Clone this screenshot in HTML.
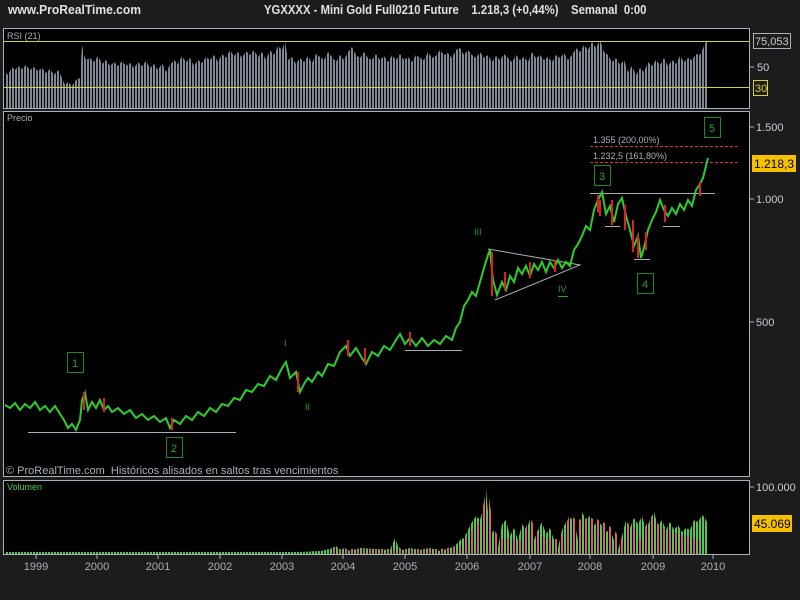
<!DOCTYPE html>
<html><head><meta charset="utf-8"><style>
body{margin:0;background:#1c1c1c;width:800px;height:600px;overflow:hidden;font-family:"Liberation Sans",sans-serif;}
.t{position:absolute;color:#c8cdd2;font-size:11px;white-space:nowrap}
</style></head><body>
<div class="t" style="left:8px;top:2px;font-size:13px;font-weight:bold;color:#e0e0e0;transform:scaleX(.93);transform-origin:left">www.ProRealTime.com</div>
<div class="t" style="left:264px;top:2px;font-size:13px;font-weight:bold;color:#e0e0e0;transform:scaleX(.87);transform-origin:left">YGXXXX - Mini Gold Full0210 Future &nbsp;&nbsp; 1.218,3 (+0,44%) &nbsp;&nbsp; Semanal &nbsp;0:00</div>
<svg width="800" height="600" style="position:absolute;left:0;top:0">
<defs>
<pattern id="st" width="3" height="10" patternUnits="userSpaceOnUse"><rect width="2" height="10" fill="#7d8894"/></pattern>
<pattern id="vg" width="3" height="10" patternUnits="userSpaceOnUse"><rect width="2" height="10" fill="#4fc94f"/></pattern>
<pattern id="vr" width="6" height="10" patternUnits="userSpaceOnUse"><rect x="3" width="2" height="10" fill="#e06060"/></pattern>
</defs>
<rect x="3.5" y="28.5" width="746" height="80" fill="#000" stroke="#a8b0b8"/>
<rect x="3.5" y="111.5" width="746" height="365" fill="#000" stroke="#a8b0b8"/>
<rect x="3.5" y="480.5" width="746" height="74" fill="#000" stroke="#a8b0b8"/>
<polygon fill="url(#st)" points="5,108 5,72 8,75 12,67 15,70 18,66 22,69 26,65 30,70 34,67 38,71 42,68 46,73 50,69 54,75 58,70 62,78 65,85 68,82 72,86 76,80 80,78 82,45 84,55 86,60 90,58 94,62 98,56 102,64 106,60 110,66 114,62 118,66 122,61 126,66 130,63 134,68 138,62 142,66 146,61 150,68 154,64 158,70 162,63 166,72 170,65 174,60 178,64 182,56 186,62 190,58 194,66 198,60 202,63 206,57 210,60 214,55 218,62 222,54 226,58 230,50 234,56 238,52 242,58 246,51 250,55 254,50 258,57 262,52 266,60 270,50 274,55 278,46 282,50 285,41 288,60 292,57 296,64 300,58 304,62 308,56 312,63 316,54 320,57 324,60 328,52 332,57 336,62 340,55 344,60 348,52 352,47 356,55 360,58 364,52 368,58 372,60 376,54 380,60 384,56 388,62 392,55 396,60 400,54 404,60 408,57 412,62 416,55 420,58 424,60 428,52 432,58 436,56 440,50 444,55 448,53 452,58 456,50 460,48 464,55 468,50 472,55 476,58 480,52 484,58 488,55 492,62 496,56 500,60 504,54 508,58 512,62 516,55 520,60 524,57 528,62 532,52 536,58 540,55 544,60 548,57 552,62 556,55 560,58 564,53 568,60 572,55 576,48 580,52 584,45 588,50 592,42 596,48 600,40 604,52 608,55 612,62 616,58 620,65 624,60 628,72 632,66 636,75 640,68 644,72 648,62 652,66 656,60 660,65 664,58 668,66 672,60 676,64 680,56 684,62 688,58 692,60 696,54 700,55 704,46 707,40 707,108"/>
<line x1="4" y1="41.5" x2="749" y2="41.5" stroke="#d8d030"/>
<line x1="4" y1="87.5" x2="749" y2="87.5" stroke="#d8d030"/>
<text x="7" y="39" fill="#a8b0b8" font-size="9">RSI (21)</text>
<line x1="749" y1="67" x2="754" y2="67" stroke="#a8b0b8"/>
<rect x="753.5" y="33.5" width="37" height="15" fill="none" stroke="#a8b0b8"/>
<text x="755" y="45" fill="#c8cdd2" font-size="11">75,053</text>
<text x="757" y="71" fill="#c8cdd2" font-size="11">50</text>
<rect x="753.5" y="80.5" width="14" height="15" fill="none" stroke="#d8d030"/>
<text x="755" y="92" fill="#d8d030" font-size="11">30</text>
<text x="7" y="121" fill="#a8b0b8" font-size="9">Precio</text>
<g stroke="#a8b0b8" stroke-width="1" fill="none">
<line x1="28" y1="432.5" x2="236" y2="432.5"/>
<line x1="405" y1="350.5" x2="462" y2="350.5"/>
<polyline points="488,249 580,265 495,300"/>
<line x1="590" y1="193.5" x2="715" y2="193.5"/>
<line x1="605" y1="226.5" x2="620" y2="226.5"/>
<line x1="634" y1="259.5" x2="650" y2="259.5"/>
<line x1="663" y1="226.5" x2="680" y2="226.5"/>
</g>
<line x1="590" y1="146.5" x2="738" y2="146.5" stroke="#e03030" stroke-dasharray="3,2"/>
<line x1="590" y1="162.5" x2="738" y2="162.5" stroke="#e03030" stroke-dasharray="3,2"/>
<text x="593" y="143" fill="#a8b0b8" font-size="9">1.355 (200,00%)</text>
<text x="593" y="159" fill="#a8b0b8" font-size="9">1.232,5 (161,80%)</text>
<polyline fill="none" stroke="#2ecc2e" stroke-width="2" points="5,405 10,408 15,403 20,410 25,404 30,408 35,402 40,410 45,406 50,412 55,406 60,414 64,420 68,428 72,424 76,430 80,420 82,400 85,393 88,410 92,402 96,408 100,400 104,410 108,406 112,412 118,408 124,414 130,410 136,418 142,414 148,420 154,416 160,422 166,418 170,428 174,420 180,424 186,416 192,420 198,412 204,416 210,408 216,412 222,404 228,406 234,398 240,400 246,390 252,392 258,384 264,386 270,376 276,380 282,368 286,362 290,378 296,372 300,392 304,384 308,378 312,382 318,372 322,376 328,364 334,366 340,352 346,346 350,356 356,348 362,358 366,364 372,352 378,356 384,346 390,350 396,340 400,334 405,344 410,338 416,346 422,338 428,346 434,340 440,344 446,336 452,340 456,328 460,322 464,306 468,300 472,292 476,296 480,282 484,268 488,255 490,250 493,280 497,295 502,282 506,290 510,276 514,282 518,268 522,274 526,266 530,276 534,264 538,270 542,262 546,272 550,262 554,268 558,260 562,268 566,262 570,266 574,250 578,244 582,236 586,226 590,230 594,210 598,200 602,192 606,214 610,206 614,222 618,204 622,198 626,216 630,230 634,246 638,236 641,258 644,248 648,230 652,220 656,212 660,200 664,210 668,216 672,208 676,214 680,204 684,210 688,200 692,206 696,190 700,184 703,178 706,166 708,158"/>
<g stroke="#e02020" stroke-width="2">
<line x1="84" y1="392" x2="84" y2="410"/><line x1="104" y1="398" x2="104" y2="412"/><line x1="172" y1="418" x2="172" y2="430"/>
<line x1="298" y1="372" x2="298" y2="392"/><line x1="348" y1="340" x2="348" y2="356"/><line x1="365" y1="348" x2="365" y2="364"/>
<line x1="410" y1="332" x2="410" y2="346"/><line x1="492" y1="252" x2="492" y2="296"/><line x1="505" y1="272" x2="505" y2="290"/>
<line x1="530" y1="262" x2="530" y2="278"/><line x1="555" y1="260" x2="555" y2="272"/><line x1="598" y1="195" x2="598" y2="212"/>
<line x1="612" y1="200" x2="612" y2="225"/><line x1="625" y1="205" x2="625" y2="230"/><line x1="633" y1="220" x2="633" y2="252"/>
<line x1="638" y1="235" x2="638" y2="258"/><line x1="665" y1="205" x2="665" y2="222"/><line x1="700" y1="182" x2="700" y2="196"/>
<line x1="600" y1="200" x2="600" y2="216"/><line x1="646" y1="232" x2="646" y2="250"/>
</g>
<g fill="none" stroke="#1a8a1a">
<rect x="67.5" y="352.5" width="16" height="20"/><rect x="166.5" y="437.5" width="16" height="20"/>
<rect x="594.5" y="165.5" width="16" height="20"/><rect x="637.5" y="273.5" width="16" height="20"/><rect x="704.5" y="117.5" width="16" height="20"/>
</g>
<g fill="#2ea02e" font-size="11">
<text x="72" y="367">1</text><text x="171" y="452">2</text><text x="599" y="180">3</text><text x="642" y="288">4</text><text x="709" y="132">5</text>
<text x="284" y="346" font-size="9">I</text><text x="305" y="410" font-size="9">II</text><text x="474" y="235" font-size="9">III</text><text x="558" y="292" font-size="9">IV</text>
</g>
<line x1="558" y1="296.5" x2="568" y2="296.5" stroke="#2ea02e"/>
<text x="6" y="474" fill="#a8b0b8" font-size="11">© ProRealTime.com &nbsp;Históricos alisados en saltos tras vencimientos</text>
<g stroke="#a8b0b8"><line x1="749" y1="127" x2="754" y2="127"/><line x1="749" y1="199" x2="754" y2="199"/><line x1="749" y1="322" x2="754" y2="322"/></g>
<text x="756" y="131" fill="#c8cdd2" font-size="11">1.500</text>
<text x="756" y="203" fill="#c8cdd2" font-size="11">1.000</text>
<text x="756" y="326" fill="#c8cdd2" font-size="11">500</text>
<rect x="752" y="155" width="44" height="17" fill="#f5c000"/>
<text x="754" y="168" fill="#000" font-size="12">1.218,3</text>
<text x="7" y="490" fill="#4fc94f" font-size="9">Volumen</text>
<polygon fill="url(#vg)" points="5,554 5,552 300,552 320,551 330,549 336,546 340,550 345,548 350,551 360,548 390,550 395,538 398,546 402,550 410,548 420,550 430,548 440,551 450,548 455,546 460,540 464,538 468,530 472,522 476,516 480,520 484,506 486,488 488,512 490,536 494,530 498,548 502,524 506,520 510,536 514,528 518,540 522,524 526,530 530,520 534,540 538,530 542,522 546,534 550,528 554,540 558,548 562,530 566,522 570,518 574,520 578,540 582,512 586,520 590,516 594,526 598,520 602,526 606,532 610,530 614,540 618,550 622,536 626,520 630,528 634,518 638,524 642,516 646,530 650,520 654,512 658,526 662,520 666,530 670,522 674,530 678,525 682,532 686,528 690,530 694,520 698,522 702,515 705,518 707,522 707,554"/>
<polygon fill="url(#vr)" points="330,554 330,549 440,549 460,546 470,532 478,524 484,502 487,484 490,505 494,530 500,538 520,540 530,518 540,536 560,540 570,514 576,520 590,518 600,520 612,528 622,540 630,520 640,540 650,515 660,526 680,534 700,540 700,554"/>
<g stroke="#a8b0b8"><line x1="749" y1="487" x2="754" y2="487"/></g>
<text x="756" y="491" fill="#c8cdd2" font-size="11">100.000</text>
<rect x="752" y="515" width="40" height="17" fill="#f5c000"/>
<text x="754" y="528" fill="#000" font-size="12">45.069</text>
<g stroke="#a8b0b8"><line x1="36" y1="554" x2="36" y2="559"/><line x1="97" y1="554" x2="97" y2="559"/><line x1="158" y1="554" x2="158" y2="559"/><line x1="220" y1="554" x2="220" y2="559"/><line x1="282" y1="554" x2="282" y2="559"/><line x1="343" y1="554" x2="343" y2="559"/><line x1="405" y1="554" x2="405" y2="559"/><line x1="467" y1="554" x2="467" y2="559"/><line x1="530" y1="554" x2="530" y2="559"/><line x1="590" y1="554" x2="590" y2="559"/><line x1="653" y1="554" x2="653" y2="559"/><line x1="713" y1="554" x2="713" y2="559"/></g>
<g fill="#a8b0b8" font-size="11" text-anchor="middle">
<text x="36" y="570">1999</text><text x="97" y="570">2000</text><text x="158" y="570">2001</text><text x="220" y="570">2002</text><text x="282" y="570">2003</text><text x="343" y="570">2004</text><text x="405" y="570">2005</text><text x="467" y="570">2006</text><text x="530" y="570">2007</text><text x="590" y="570">2008</text><text x="653" y="570">2009</text><text x="713" y="570">2010</text>
</g>
</svg>
</body></html>
